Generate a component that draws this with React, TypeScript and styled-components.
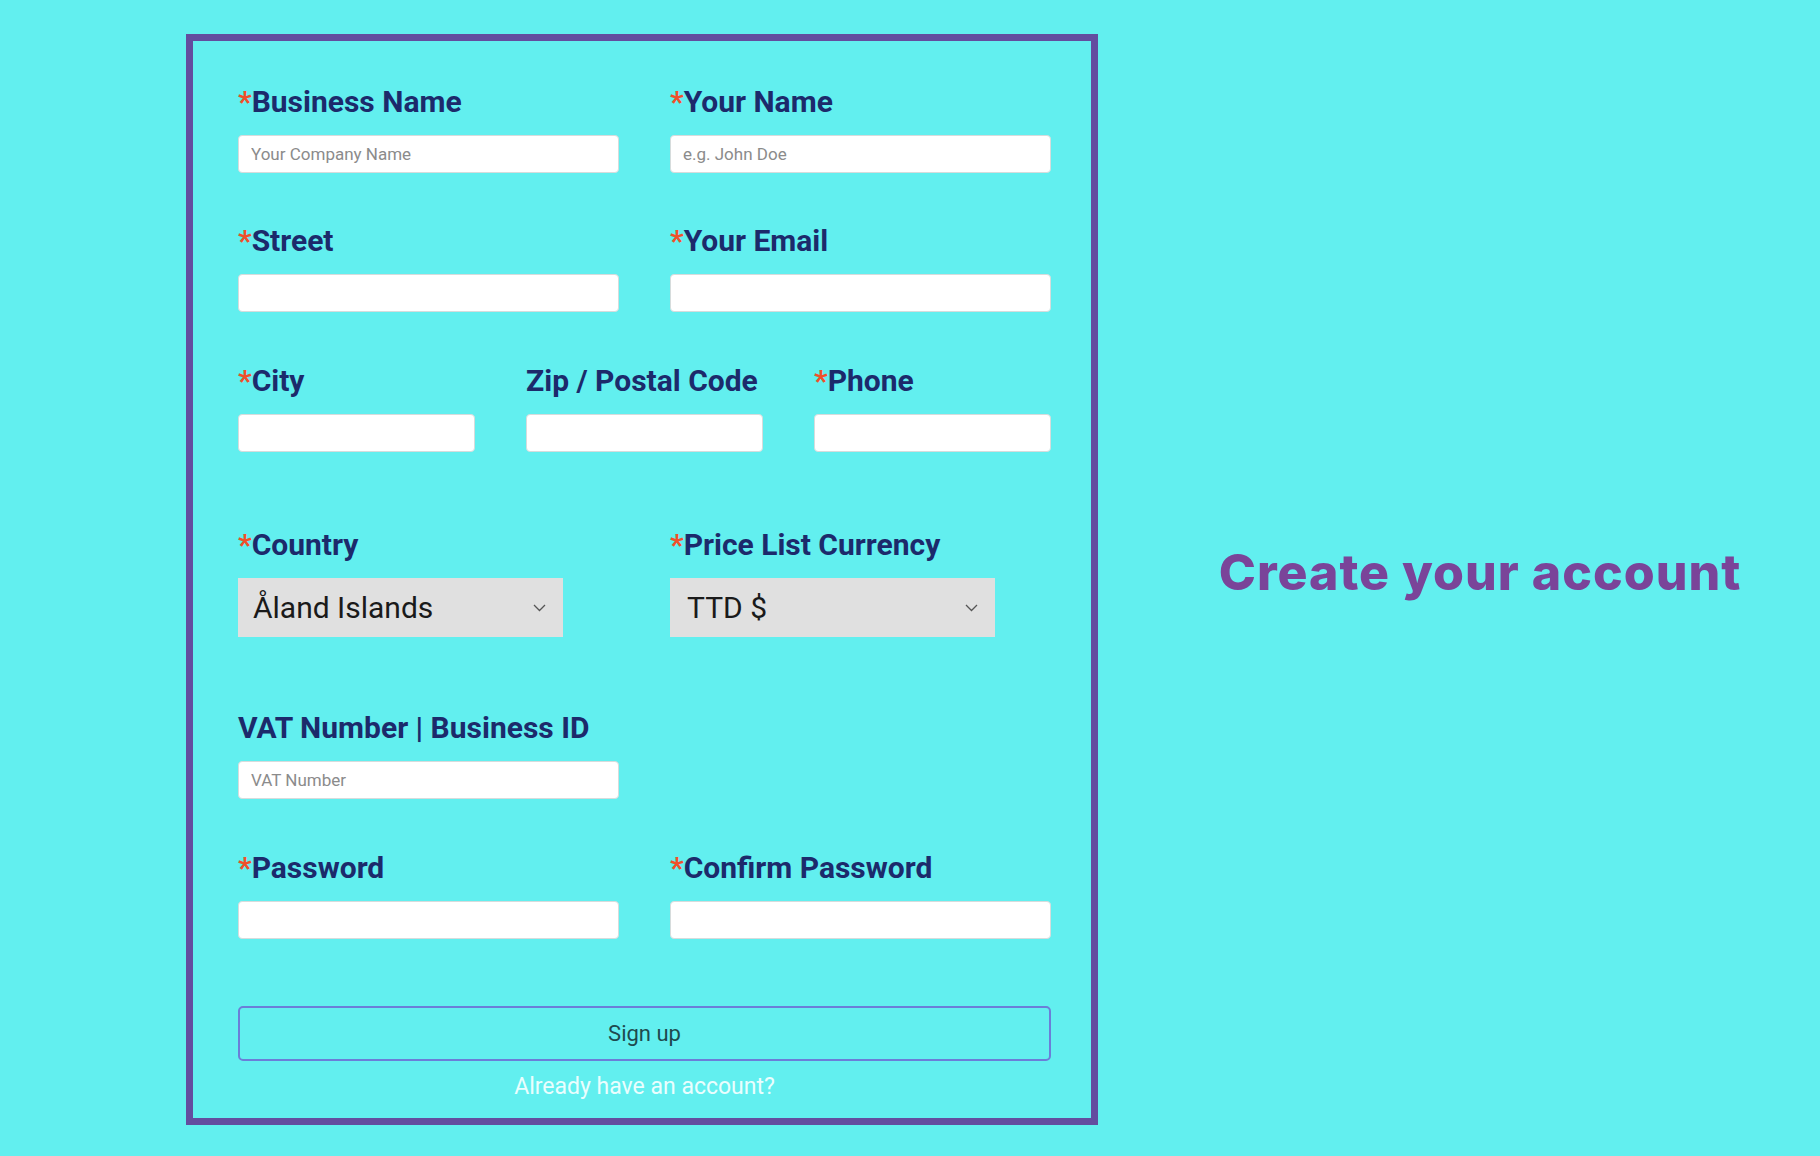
import React from "react";
import styled, { createGlobalStyle } from "styled-components";

const GlobalStyle = createGlobalStyle`
  html, body {
    margin: 0;
    padding: 0;
    background: #62efef;
  }
  body {
    font-family: Roboto, "Liberation Sans", sans-serif;
  }
  * {
    box-sizing: border-box;
  }
`;

const Page = styled.div`
  display: flex;
  align-items: stretch;
  min-height: 1156px;
  padding: 34px 0 0 186px;
  background: #62efef;
`;

const Card = styled.form`
  width: 912px;
  display: flex;
  flex-direction: column;
  border: 7px solid #634d9f;
  padding: 43px 40px 17px 45px;
  align-self: flex-start;
`;

const Row = styled.div<{ $cols: number; $top: number }>`
  display: grid;
  grid-template-columns: repeat(${p => p.$cols}, 1fr);
  column-gap: 51px;
  margin-top: ${p => p.$top}px;
`;

const Field = styled.div`
  display: flex;
  flex-direction: column;
  align-items: flex-start;
`;

const Label = styled.label`
  font-family: Roboto, "Liberation Sans", sans-serif;
  font-weight: 700;
  font-size: 30px;
  line-height: 36px;
  color: #1c2a6b;
  margin-bottom: 15px;
  white-space: nowrap;
`;

const Star = styled.span`
  color: #f0502a;
`;

const TextInput = styled.input`
  width: 100%;
  height: 38px;
  background: #fff;
  border: 1px solid #d6dcdc;
  border-radius: 4px;
  padding: 0 12px;
  font-family: Roboto, "Liberation Sans", sans-serif;
  font-size: 17px;
  color: #333;
  outline: none;

  &::placeholder {
    color: #8b8b8b;
  }
`;

const SelectWrap = styled.div`
  position: relative;
  width: 325px;
  height: 59px;
`;

const Select = styled.select<{ $pad: number }>`
  appearance: none;
  width: 100%;
  height: 100%;
  border: none;
  border-radius: 0;
  background: #e0e0e0;
  padding: 0 40px 0 ${p => p.$pad}px;
  font-family: Roboto, "Liberation Sans", sans-serif;
  font-size: 30px;
  color: #1a1a1a;
  outline: none;
`;

const Chevron = styled.svg`
  position: absolute;
  right: 17px;
  top: 26px;
  width: 13px;
  height: 8px;
  pointer-events: none;
`;

const SubmitButton = styled.button`
  margin-top: 67px;
  width: 100%;
  height: 55px;
  background: transparent;
  border: 2px solid #6b7ed8;
  border-radius: 5px;
  font-family: Roboto, "Liberation Sans", sans-serif;
  font-size: 22px;
  color: #1e4a4e;
  cursor: pointer;
`;

const LoginLink = styled.a`
  margin-top: 12px;
  align-self: center;
  font-family: Roboto, "Liberation Sans", sans-serif;
  font-size: 23px;
  line-height: 28px;
  color: #eafefe;
  text-decoration: none;
`;

const Aside = styled.div`
  flex: 1;
  display: flex;
  align-items: center;
  justify-content: center;
  padding: 0 0 14px 42px;
  height: 1089px;
`;

const Heading = styled.h1`
  margin: 0;
  font-family: Inter, "Liberation Sans", sans-serif;
  font-weight: 800;
  font-size: 50px;
  line-height: 1;
  letter-spacing: 1px;
  color: #7a4499;
  white-space: nowrap;
`;

type InputProps = {
  label: string;
  required?: boolean;
  placeholder?: string;
  type?: string;
};

const InputField: React.FC<InputProps> = ({ label, required, placeholder, type }) => (
  <Field>
    <Label>
      {required && <Star>*</Star>}
      {label}
    </Label>
    <TextInput type={type || "text"} placeholder={placeholder} />
  </Field>
);

const SelectField: React.FC<{ label: string; value: string; pad?: number }> = ({
  label,
  value,
  pad = 15,
}) => (
  <Field>
    <Label>
      <Star>*</Star>
      {label}
    </Label>
    <SelectWrap>
      <Select defaultValue={value} $pad={pad}>
        <option value={value}>{value}</option>
      </Select>
      <Chevron viewBox="0 0 13 8" fill="none">
        <path d="M1 1l5.5 5.5L12 1" stroke="#555" strokeWidth="1.3" />
      </Chevron>
    </SelectWrap>
  </Field>
);

const App: React.FC = () => {
  return (
    <Page>
      <GlobalStyle />
      <Card onSubmit={e => e.preventDefault()}>
        <Row $cols={2} $top={0}>
          <InputField label="Business Name" required placeholder="Your Company Name" />
          <InputField label="Your Name" required placeholder="e.g. John Doe" />
        </Row>
        <Row $cols={2} $top={50}>
          <InputField label="Street" required />
          <InputField label="Your Email" required type="email" />
        </Row>
        <Row $cols={3} $top={51}>
          <InputField label="City" required />
          <InputField label="Zip / Postal Code" />
          <InputField label="Phone" required />
        </Row>
        <Row $cols={2} $top={75}>
          <SelectField label="Country" value="Åland Islands" />
          <SelectField label="Price List Currency" value="TTD $" pad={17} />
        </Row>
        <Row $cols={2} $top={73}>
          <InputField label="VAT Number | Business ID" placeholder="VAT Number" />
        </Row>
        <Row $cols={2} $top={51}>
          <InputField label="Password" required type="password" />
          <InputField label="Confirm Password" required type="password" />
        </Row>
        <SubmitButton type="submit">Sign up</SubmitButton>
        <LoginLink href="#">Already have an account?</LoginLink>
      </Card>
      <Aside>
        <Heading>Create your account</Heading>
      </Aside>
    </Page>
  );
};

export default App;
